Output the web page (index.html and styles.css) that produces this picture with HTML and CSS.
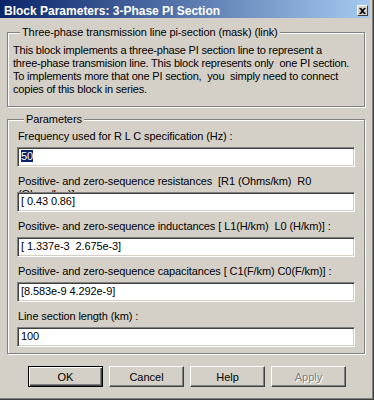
FILE: index.html
```html
<!DOCTYPE html>
<html>
	<head>
		<meta charset='utf-8'/>
		<title>Block Parameters: 3-Phase PI Section</title>
		<link rel="stylesheet" href="styles.css">
	</head>
	<body>
		<div class="window">
			<div class="titlebar">
				<span class="title">Block Parameters: 3-Phase PI Section</span>
				<span class="close">
					<svg width="7" height="6" viewBox="0 0 7 6"><path d="M0 0h2l1.5 1.5L5 0h2L4.5 3 7 6H5L3.5 4.5 2 6H0l2.5-3z" fill="#000"/></svg>
				</span>
			</div>
			<fieldset class="group mask">
				<legend>Three-phase transmission line pi-section (mask) (link)</legend>
				<p class="desc">This block implements a three-phase PI section line to represent a<br>three-phase transmision line. This block represents only &nbsp;one PI section.<br>To implements more that one PI section, &nbsp;you &nbsp;simply need to connect<br>copies of this block in series.</p>
			</fieldset>
			<fieldset class="group params">
				<legend>Parameters</legend>
				<div class="param">
					<div class="label">Frequency used for R L C specification (Hz) :</div>
					<div class="field"><span class="sel">50</span></div>
				</div>
				<div class="param">
					<div class="label wrap">Positive- and zero-sequence resistances &nbsp;[R1 (Ohms/km) &nbsp;R0<br>(Ohms/km)]</div>
					<div class="field">[ 0.43 0.86]</div>
				</div>
				<div class="param">
					<div class="label">Positive- and zero-sequence inductances [ L1(H/km) &nbsp;L0 (H/km)] :</div>
					<div class="field">[ 1.337e-3 &nbsp;2.675e-3]</div>
				</div>
				<div class="param">
					<div class="label">Positive- and zero-sequence capacitances [ C1(F/km) C0(F/km)] :</div>
					<div class="field">[8.583e-9 4.292e-9]</div>
				</div>
				<div class="param">
					<div class="label">Line section length (km) :</div>
					<div class="field">100</div>
				</div>
			</fieldset>
			<div class="buttons">
				<button class="btn default">OK</button>
				<button class="btn">Cancel</button>
				<button class="btn">Help</button>
				<button class="btn disabled">Apply</button>
			</div>
		</div>
	</body>
</html>
```

FILE: styles.css
```css
body {
	margin: 0;
	background: #d4d0c8;
	font-family: "Liberation Sans", Arial, sans-serif;
	font-size: 11px;
	letter-spacing: -0.1px;
	color: #000;
}
.window {
	width: 374px;
	height: 400px;
	box-sizing: border-box;
	overflow: hidden;
	background: #d4d0c8;
	box-shadow: inset -1px -1px #404040, inset -2px -2px #808080;
}
.titlebar {
	width: 370px;
	height: 18px;
	box-sizing: border-box;
	padding: 3px 2px 0 4px;
	display: flex;
	align-items: center;
	justify-content: space-between;
	background: linear-gradient(to right, #0a246a, #a6caf0);
	color: #fff;
	font-weight: bold;
	font-size: 12px;
	letter-spacing: 0;
}
.close {
	width: 11px;
	height: 11px;
	box-sizing: border-box;
	display: flex;
	align-items: center;
	justify-content: center;
	background: #d4d0c8;
	border: 1px solid;
	border-color: #fff #404040 #404040 #fff;
}
.group {
	width: 358px;
	box-sizing: border-box;
	margin: 0 0 0 7px;
	border: 1px solid #808080;
	box-shadow: inset 1px 1px #fff, 1px 1px #fff;
	min-width: 0;
}
.group legend {
	margin-left: 7px;
	padding: 0 2px;
	line-height: 13px;
	background: #d4d0c8;
}
.mask {
	margin-top: 8px;
	padding: 5px 5px 10px 5px;
}
.desc {
	margin: 0;
	line-height: 13px;
	letter-spacing: -0.2px;
	white-space: nowrap;
}
.params {
	margin-top: 6px;
	padding: 4px 0 6px 9px;
}
.param {
	margin-bottom: 8px;
}
.param:last-child {
	margin-bottom: 0;
}
.label {
	height: 13px;
	padding-left: 1px;
	margin-bottom: 4px;
	line-height: 13px;
	white-space: nowrap;
}
.label.wrap {
	height: 17px;
	margin-bottom: 0;
	overflow: hidden;
}
.field {
	width: 338px;
	height: 20px;
	box-sizing: border-box;
	padding: 0 3px;
	line-height: 16px;
	white-space: pre;
	background: #fff;
	border: 1px solid;
	border-color: #808080 #fff #fff #808080;
	box-shadow: inset 1px 1px #404040, inset -1px -1px #d4d0c8;
}
.sel {
	background: #0a246a;
	color: #fff;
}
.buttons {
	display: flex;
	gap: 6px;
	margin: 12px 0 0 28px;
}
.btn {
	width: 75px;
	height: 21px;
	box-sizing: border-box;
	padding: 0;
	font: inherit;
	color: #000;
	background: #d4d0c8;
	border: 1px solid;
	border-color: #fff #404040 #404040 #fff;
	box-shadow: inset -1px -1px #808080;
}
.btn.default {
	border-color: #000;
	box-shadow: inset 1px 1px #fff, inset -1px -1px #404040, inset -2px -2px #808080;
}
.btn.disabled {
	color: #808080;
	text-shadow: 1px 1px #fff;
}
```
